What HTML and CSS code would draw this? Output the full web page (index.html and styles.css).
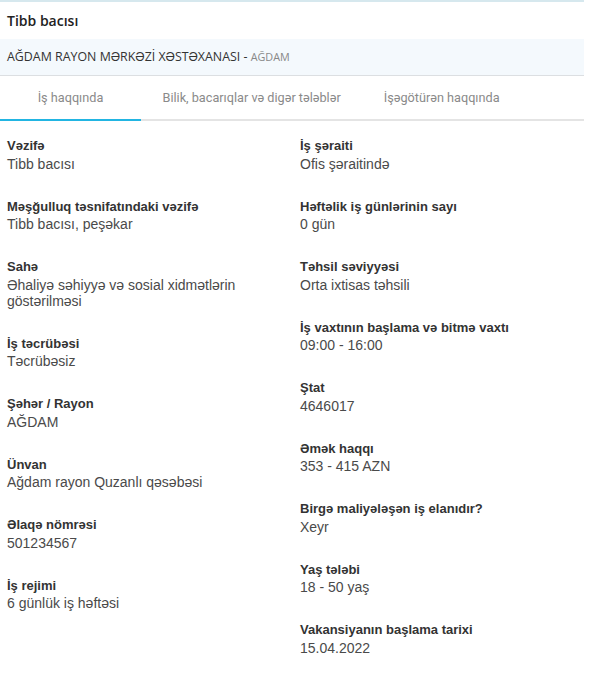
FILE: index.html
```html
<!DOCTYPE html>
<html lang="az">
<head>
    <meta charset="UTF-8">
    <meta name="viewport" content="width=device-width, initial-scale=1.0">
    <title>Tibb bacısı</title>
    <link rel="stylesheet" href="styles.css">
</head>
<body>

    <div class="vacancy">
        <h1 class="vacancy-title">Tibb bacısı</h1>

        <div class="company">
            AĞDAM RAYON MƏRKƏZİ XƏSTƏXANASI - <span class="company-city">AĞDAM</span>
        </div>

        <div class="tabs">
            <div class="tab active">İş haqqında</div>
            <div class="tab">Bilik, bacarıqlar və digər tələblər</div>
            <div class="tab">İşəgötürən haqqında</div>
        </div>

        <div class="details">
            <div class="column">
                <div class="field">
                    <div class="field-label">Vəzifə</div>
                    <div class="field-value">Tibb bacısı</div>
                </div>
                <div class="field">
                    <div class="field-label">Məşğulluq təsnifatındaki vəzifə</div>
                    <div class="field-value">Tibb bacısı, peşəkar</div>
                </div>
                <div class="field">
                    <div class="field-label">Sahə</div>
                    <div class="field-value">Əhaliyə səhiyyə və sosial xidmətlərin göstərilməsi</div>
                </div>
                <div class="field">
                    <div class="field-label">İş təcrübəsi</div>
                    <div class="field-value">Təcrübəsiz</div>
                </div>
                <div class="field">
                    <div class="field-label">Şəhər / Rayon</div>
                    <div class="field-value">AĞDAM</div>
                </div>
                <div class="field">
                    <div class="field-label">Ünvan</div>
                    <div class="field-value">Ağdam rayon Quzanlı qəsəbəsi</div>
                </div>
                <div class="field">
                    <div class="field-label">Əlaqə nömrəsi</div>
                    <div class="field-value">501234567</div>
                </div>
                <div class="field">
                    <div class="field-label">İş rejimi</div>
                    <div class="field-value">6 günlük iş həftəsi</div>
                </div>
            </div>

            <div class="column">
                <div class="field">
                    <div class="field-label">İş şəraiti</div>
                    <div class="field-value">Ofis şəraitində</div>
                </div>
                <div class="field">
                    <div class="field-label">Həftəlik iş günlərinin sayı</div>
                    <div class="field-value">0 gün</div>
                </div>
                <div class="field">
                    <div class="field-label">Təhsil səviyyəsi</div>
                    <div class="field-value">Orta ixtisas təhsili</div>
                </div>
                <div class="field">
                    <div class="field-label">İş vaxtının başlama və bitmə vaxtı</div>
                    <div class="field-value">09:00 - 16:00</div>
                </div>
                <div class="field">
                    <div class="field-label">Ştat</div>
                    <div class="field-value">4646017</div>
                </div>
                <div class="field">
                    <div class="field-label">Əmək haqqı</div>
                    <div class="field-value">353 - 415 AZN</div>
                </div>
                <div class="field">
                    <div class="field-label">Birgə maliyələşən iş elanıdır?</div>
                    <div class="field-value">Xeyr</div>
                </div>
                <div class="field">
                    <div class="field-label">Yaş tələbi</div>
                    <div class="field-value">18 - 50 yaş</div>
                </div>
                <div class="field">
                    <div class="field-label">Vakansiyanın başlama tarixi</div>
                    <div class="field-value">15.04.2022</div>
                </div>
            </div>
        </div>
    </div>

</body>
</html>
```

FILE: styles.css
```css
body {
    margin: 0;
    background-color: #fff;
    font-family: "Liberation Sans", Arial, sans-serif;
}
.vacancy {
    width: 584px;
    border-top: 2px solid #d6e8ee;
}
.vacancy-title {
    margin: 0;
    padding: 9px 7px 8px;
    font-family: "Open Sans", sans-serif;
    font-size: 14px;
    font-weight: 600;
    line-height: 20px;
    color: #222;
}
.company {
    padding: 9px 7px;
    height: 18px;
    line-height: 18px;
    background-color: #f4f9fd;
    border-bottom: 1px solid #dcdfe2;
    font-family: "Open Sans", sans-serif;
    font-size: 12.4px;
    color: #333;
}
.company-city {
    font-size: 10.8px;
    color: #888;
}
.tabs {
    display: flex;
    border-bottom: 2px solid #e4e4e4;
}
.tab {
    padding: 13px 21.5px;
    font-family: Roboto, sans-serif;
    font-size: 12.7px;
    line-height: 17px;
    color: #8a8a8a;
    border-bottom: 2px solid transparent;
    margin-bottom: -2px;
}
.tab.active {
    width: 98px;
    text-align: center;
    border-bottom-color: #22b5e2;
}
.details {
    display: grid;
    grid-template-columns: 293px 291px;
    padding-top: 16px;
}
.column {
    padding: 0 7px;
}
.field {
    margin-bottom: 26px;
}
.field-label {
    font-size: 13px;
    font-weight: bold;
    line-height: 18.5px;
    color: #333;
}
.field-value {
    font-size: 14px;
    line-height: 16px;
    color: #4a4a4a;
    padding-right: 40px;
}
```
